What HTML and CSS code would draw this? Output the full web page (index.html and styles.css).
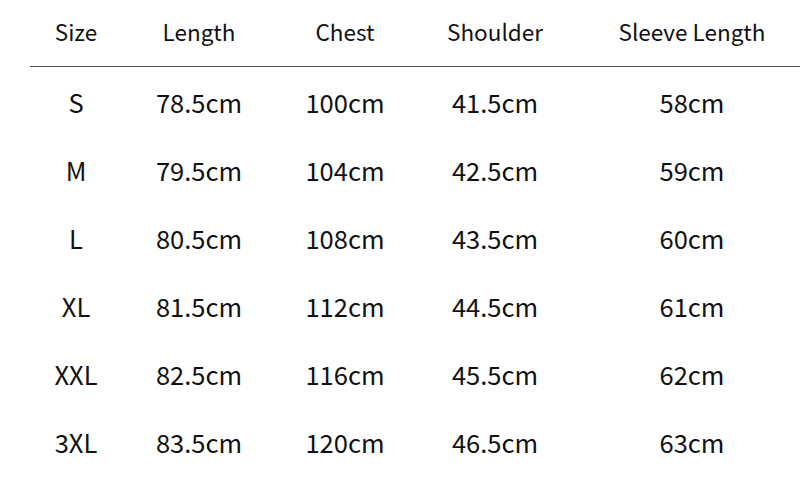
FILE: index.html
```html
<!DOCTYPE html>
<html>
<head>
<meta charset="utf-8">
<link rel="stylesheet" href="styles.css">
</head>
<body>
<div class="chart">
  <div class="row head">
    <div class="cell">Size</div><div class="cell">Length</div><div class="cell">Chest</div><div class="cell">Shoulder</div><div class="cell last">Sleeve Length</div>
  </div>
  <div class="row"><div class="cell">S</div><div class="cell">78.5cm</div><div class="cell">100cm</div><div class="cell">41.5cm</div><div class="cell last">58cm</div></div>
  <div class="row"><div class="cell">M</div><div class="cell">79.5cm</div><div class="cell">104cm</div><div class="cell">42.5cm</div><div class="cell last">59cm</div></div>
  <div class="row"><div class="cell">L</div><div class="cell">80.5cm</div><div class="cell">108cm</div><div class="cell">43.5cm</div><div class="cell last">60cm</div></div>
  <div class="row"><div class="cell">XL</div><div class="cell">81.5cm</div><div class="cell">112cm</div><div class="cell">44.5cm</div><div class="cell last">61cm</div></div>
  <div class="row"><div class="cell">XXL</div><div class="cell">82.5cm</div><div class="cell">116cm</div><div class="cell">45.5cm</div><div class="cell last">62cm</div></div>
  <div class="row"><div class="cell">3XL</div><div class="cell">83.5cm</div><div class="cell">120cm</div><div class="cell">46.5cm</div><div class="cell last">63cm</div></div>
</div>
</body>
</html>
```
FILE: styles.css
```css
html, body { margin: 0; padding: 0; background: #fff; }
body {
  font-family: "Noto Sans CJK SC", "Noto Sans", sans-serif;
  color: #111;
  width: 800px;
  height: 490px;
  overflow: hidden;
}
.chart { padding-left: 30px; padding-top: 0; }
.row {
  display: grid;
  grid-template-columns: 92px 154px 138px 162px 1fr;
  height: 68px;
  align-items: center;
  font-size: 25.5px;
}
.row.head {
  height: 67px;
  box-sizing: border-box;
  padding-bottom: 4px;
  font-size: 22.5px;
  border-bottom: 1px solid #555;
}
.cell { text-align: center; white-space: nowrap; }
.cell.last { padding-left: 8px; }
```
